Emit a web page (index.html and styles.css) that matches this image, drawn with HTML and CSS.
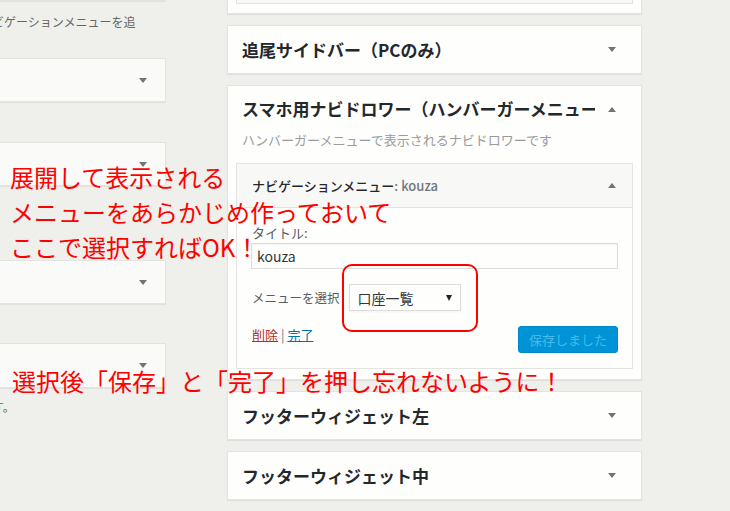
FILE: index.html
```html
<!DOCTYPE html>
<html lang="ja">
<head>
<meta charset="utf-8">
<title>Widgets</title>
<link rel="stylesheet" href="styles.css">
</head>
<body>
<div class="page">
  <div class="left-col">
    <div class="lcard lcard-top"></div>
    <p class="ldesc">ビゲーションメニューを追</p>
    <div class="lcard c1"><span class="arrow down"></span></div>
    <div class="lcard c2"><span class="arrow down"></span></div>
    <div class="lcard c3"><span class="arrow down"></span></div>
    <div class="lcard c4"><span class="arrow down"></span></div>
    <p class="ldesc ldesc-end"><span class="blue">す</span>。</p>
  </div>

  <div class="right-col">
    <div class="card card-top">
      <div class="inner-stub"></div>
    </div>

    <div class="card card-closed">
      <h3 class="card-title">追尾サイドバー（PCのみ）</h3>
      <span class="arrow down"></span>
    </div>

    <div class="card card-open">
      <div class="card-head">
        <h3 class="card-title">スマホ用ナビドロワー（ハンバーガーメニュー）</h3>
        <span class="arrow up"></span>
      </div>
      <p class="card-desc">ハンバーガーメニューで表示されるナビドロワーです</p>

      <div class="widget">
        <div class="widget-head">
          <h4 class="widget-title">ナビゲーションメニュー<span class="in-title">: kouza</span></h4>
          <span class="arrow up"></span>
        </div>
        <div class="widget-body">
          <label class="field-label">タイトル:</label>
          <div class="text-input">kouza</div>
          <div class="select-row">
            <span class="select-label">メニューを選択</span>
            <div class="select-box"><span>口座一覧</span><span class="select-caret"></span></div>
          </div>
          <div class="actions">
            <div class="links"><a class="del">削除</a> <span class="sep">|</span> <a class="done">完了</a></div>
            <button class="save" type="button">保存しました</button>
          </div>
        </div>
      </div>
    </div>

    <div class="card card-closed">
      <h3 class="card-title">フッターウィジェット左</h3>
      <span class="arrow down"></span>
    </div>

    <div class="card card-closed">
      <h3 class="card-title">フッターウィジェット中</h3>
      <span class="arrow down"></span>
    </div>
  </div>
</div>

<div class="note note-top">展開して表示される<br>メニューをあらかじめ作っておいて<br>ここで選択すればOK！</div>
<div class="note-ring"></div>
<div class="note note-bottom">選択後「保存」と「完了」を押し忘れないように！</div>
</body>
</html>
```

FILE: styles.css
```css
* { box-sizing: border-box; }

html, body {
  margin: 0;
  padding: 0;
}

body {
  width: 730px;
  height: 511px;
  overflow: hidden;
  position: relative;
  background: #efefec;
  font-family: "Noto Sans CJK JP", "Noto Sans", sans-serif;
  color: #444;
}

.page {
  display: flex;
  align-items: flex-start;
}

/* ---------- left column ---------- */
.left-col {
  width: 176px;
  margin-left: -10px;
  flex: none;
}

.lcard {
  background: #fafaf8;
  border: 1px solid #e3e3e0;
  box-shadow: 0 1px 1px rgba(0, 0, 0, 0.05);
  display: flex;
  align-items: center;
  justify-content: flex-end;
  padding-right: 18px;
}

.lcard-top { height: 30px; margin-top: -29px; }
.c1 { margin-top: 28px; height: 44px; }
.c2 { margin-top: 40px; height: 44px; }
.c3 { margin-top: 74px; height: 44px; }
.c4 { margin-top: 39px; height: 45px; }

.ldesc {
  margin: 13px 0 0 2px;
  font-size: 12px;
  line-height: 16px;
  white-space: nowrap;
  color: #666;
}

.ldesc-end { margin-top: 11px; }
.blue { color: #2a7ab8; }

/* ---------- arrows ---------- */
.arrow {
  flex: none;
  width: 0;
  height: 0;
  border-left: 4px solid transparent;
  border-right: 4px solid transparent;
}
.arrow.down { border-top: 5px solid #6f747a; }
.arrow.up { border-bottom: 5px solid #6f747a; }

/* ---------- right column ---------- */
.right-col {
  width: 415px;
  margin-left: 61px;
  flex: none;
}

.card {
  background: #fefefc;
  border: 1px solid #e3e3e0;
  box-shadow: 0 1px 1px rgba(0, 0, 0, 0.06);
  margin-top: 11px;
}

.card-top {
  height: 40px;
  margin-top: -26px;
  padding: 0 8px 9px;
  display: flex;
  flex-direction: column;
  justify-content: flex-end;
}

.inner-stub {
  height: 30px;
  border: 1px solid #e3e3e0;
  background: #f8f8f6;
}

.card-closed {
  height: 49px;
  display: flex;
  align-items: center;
  padding: 0 25px 0 14px;
}

.card-title {
  flex: 1;
  min-width: 0;
  margin: 0 13px 0 0;
  font-size: 17px;
  line-height: 24px;
  font-weight: 700;
  color: #23282d;
  white-space: nowrap;
  overflow: hidden;
}

.card-open {
  padding-bottom: 10px;
}

.card-head {
  height: 46px;
  display: flex;
  align-items: center;
  padding: 0 25px 0 14px;
}

.card-desc {
  margin: 0 0 15px;
  padding-left: 14px;
  font-size: 13px;
  line-height: 16px;
  color: #999b9d;
}

/* ---------- inner widget ---------- */
.widget {
  margin: 0 8px;
  border: 1px solid #e3e3e0;
  background: #fefefc;
}

.widget-head {
  height: 44px;
  background: #f8f8f6;
  border-bottom: 1px solid #e3e3e0;
  display: flex;
  align-items: center;
  justify-content: space-between;
  padding: 0 16px 0 15px;
}

.widget-title {
  margin: 0;
  font-size: 13px;
  line-height: 18px;
  font-weight: 500;
  color: #23282d;
}

.in-title { color: #72777c; }

.widget-body {
  padding: 16px 14px 15px;
}

.field-label {
  display: block;
  font-size: 13px;
  line-height: 18px;
  color: #555d66;
  padding-left: 1px;
}

.text-input {
  margin-top: 1px;
  height: 26px;
  border: 1px solid #dcdcda;
  box-shadow: inset 0 1px 2px rgba(0, 0, 0, 0.05);
  background: #fefefc;
  padding-left: 5px;
  font-size: 14px;
  line-height: 24px;
  color: #32373c;
}

.select-row {
  margin-top: 15px;
  display: flex;
  align-items: center;
  gap: 9px;
}

.select-label {
  font-size: 12.5px;
  line-height: 18px;
  color: #555d66;
  padding-left: 1px;
}

.select-box {
  width: 112px;
  height: 27px;
  border: 1px solid #dcdcda;
  box-shadow: 0 1px 2px rgba(0, 0, 0, 0.05);
  background: #fefefc;
  display: flex;
  align-items: center;
  justify-content: space-between;
  padding: 0 8px 0 8px;
  font-size: 14px;
  color: #32373c;
}

.select-caret {
  width: 0;
  height: 0;
  border-left: 3.5px solid transparent;
  border-right: 3.5px solid transparent;
  border-top: 6px solid #222;
}

.actions {
  margin-top: 15px;
  display: flex;
  justify-content: space-between;
  align-items: flex-start;
}

.links {
  font-size: 13px;
  line-height: 18px;
  padding-left: 1px;
}

.links a { text-decoration: underline; }
.del { color: #b32d2e; }
.done { color: #0073aa; }
.sep { color: #72777c; }

.save {
  width: 100px;
  height: 27px;
  border: 1px solid #0088c8;
  border-radius: 3px;
  background: #0093d5;
  color: #45bbea;
  font-family: "Noto Sans CJK JP", sans-serif;
  font-size: 13px;
  padding: 0;
}

/* ---------- annotations ---------- */
.note {
  position: absolute;
  color: #ff0000;
  font-family: "Noto Sans CJK JP", sans-serif;
  font-size: 24px;
  line-height: 35px;
  white-space: nowrap;
}

.note-top { left: 10px; top: 159px; }
.note-bottom { left: 12px; top: 363px; }

.note-ring {
  position: absolute;
  left: 342px;
  top: 264px;
  width: 136px;
  height: 68px;
  border: 2px solid #ff0000;
  border-radius: 10px;
}
```
